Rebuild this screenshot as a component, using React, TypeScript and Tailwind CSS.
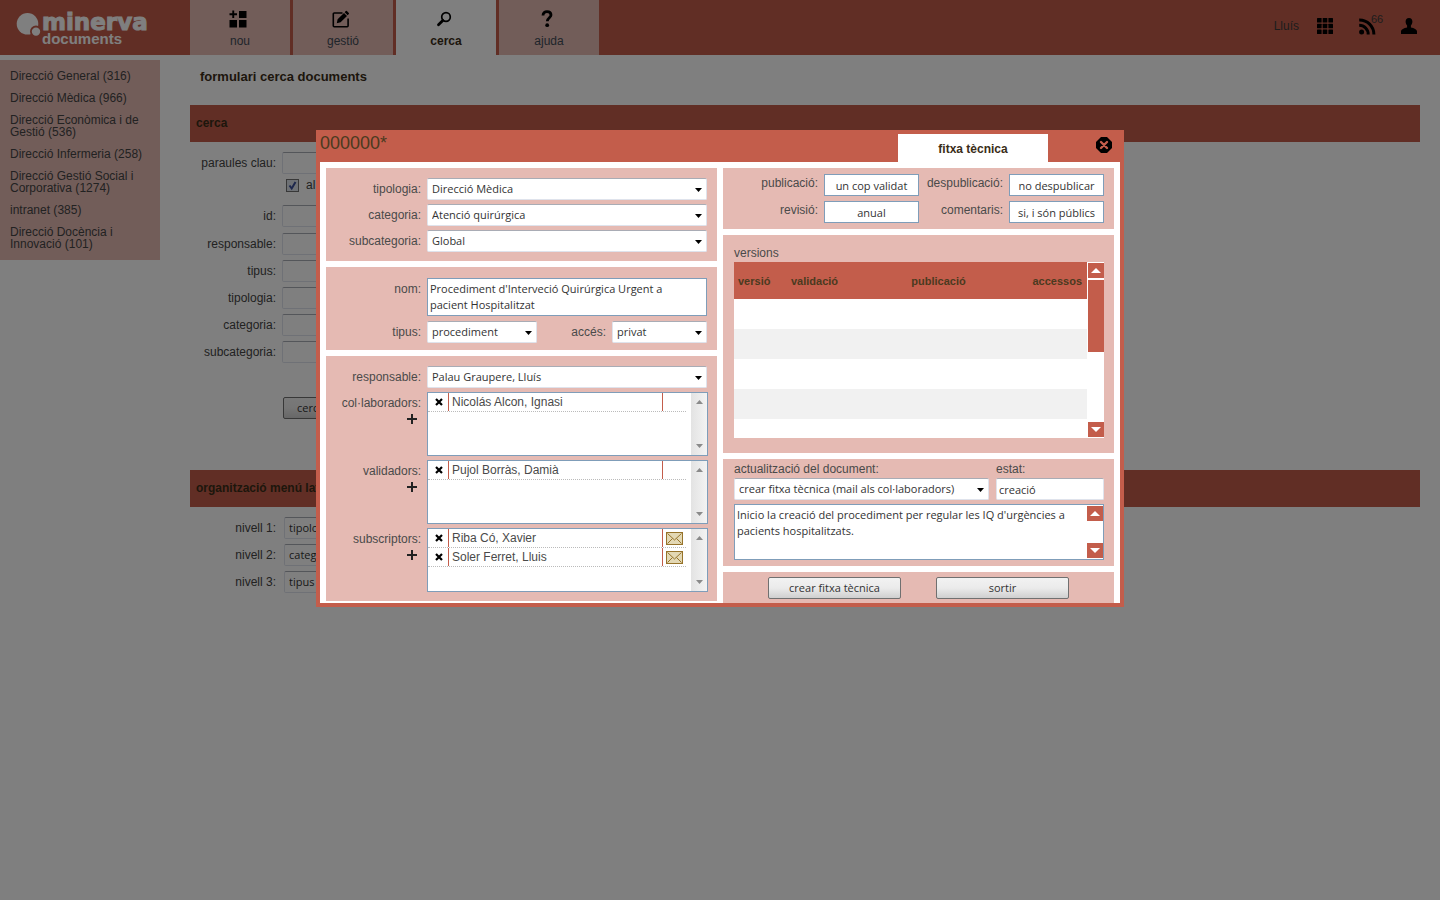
import React, { useState } from 'react'

const menu = [
  { name: 'Direcció General', count: 316 },
  { name: 'Direcció Mèdica', count: 966 },
  { name: 'Direcció Econòmica i de Gestió', count: 536 },
  { name: 'Direcció Infermeria', count: 258 },
  { name: 'Direcció Gestió Social i Corporativa', count: 1274 },
  { name: 'intranet', count: 385 },
  { name: 'Direcció Docència i Innovació', count: 101 },
]

const Logo = () => (
  <a href="#" className="flex w-[190px] items-start pl-4 pt-3 text-white" aria-label="minerva documents">
    <svg width="26" height="26" viewBox="0 0 26 26" fill="currentColor" className="shrink-0">
      <circle cx="11.500" cy="11.800" r="10.800" />
      <circle cx="20" cy="19.600" r="5.100" stroke="#c35d4b" strokeWidth="1.800" />
    </svg>
    <span className="flex flex-col font-bold">
      <span className="font-['DejaVu_Sans',sans-serif] text-[23px] leading-5 [-webkit-text-stroke:1px_white]">minerva</span>
      <span className="text-[15px] leading-[14px]">documents</span>
    </span>
  </a>
)

const NewIcon = () => (
  <svg width="18" height="18" viewBox="0 0 18 18" fill="currentColor">
    <path d="M3.300 0.500h1.900v2.800H8v1.900H5.200V8H3.300V5.200H0.500V3.300h2.800zM10 1h7.500v7H10zM0.500 10H8v7.500H0.500zM10 10h7.500v7.500H10z" />
  </svg>
)

const EditIcon = () => (
  <svg width="18" height="18" viewBox="0 0 18 18" fill="none">
    <path d="M10.500 3H2.200A.9.9 0 0 0 1.300 3.900V15.800a.9.900 0 0 0 .9.900H15.200a.9.900 0 0 0 .9-.9V8.500" stroke="currentColor" strokeWidth="1.600" />
    <path d="M4.800 13.200l.8-3.900 6.400-6.400 3 3-6.400 6.400zM12.700 2.200l1.100-1.100a.8.800 0 0 1 1.100 0l1.900 1.900a.8.800 0 0 1 0 1.100l-1.100 1.100z" fill="currentColor" />
  </svg>
)

const SearchIcon = () => (
  <svg width="18" height="18" viewBox="0 0 18 18" fill="none" stroke="currentColor">
    <circle cx="11" cy="7" r="4.300" strokeWidth="1.700" />
    <path d="M7.800 10.500L3.500 14.700" strokeWidth="2.800" strokeLinecap="round" />
  </svg>
)

const HelpIcon = () => (
  <svg width="18" height="18" viewBox="0 0 18 18" fill="none">
    <path d="M5 5.500C5 2.800 6.800 1.700 9 1.700s4 1.200 4 3.400c0 2.600-3.700 2.800-3.700 6.200" stroke="currentColor" strokeWidth="2.800" />
    <circle cx="9.200" cy="15.200" r="1.900" fill="currentColor" />
  </svg>
)

const GridIcon = () => (
  <svg width="16" height="16" viewBox="0 0 16 16" fill="currentColor">
    {[0, 5.7, 11.4].map((y) => [0, 5.7, 11.4].map((x) => <rect key={`${x}-${y}`} x={x} y={y} width="4.600" height="4.600" rx="0.500" />))}
  </svg>
)

const FeedIcon = () => (
  <svg width="17" height="17" viewBox="0 0 17 17" fill="none" stroke="currentColor" strokeWidth="3">
    <circle cx="2.600" cy="14" r="2.500" fill="currentColor" stroke="none" />
    <path d="M0.200 7.200a9 9 0 0 1 9 9.300M0.200 1.900a14.500 14.500 0 0 1 14.700 14.600" />
  </svg>
)

const UserIcon = () => (
  <svg width="18" height="18" viewBox="0 0 18 18" fill="currentColor">
    <path d="M9 1C6.700 1 5.600 2.600 5.600 4.600c0 1.700.7 3 1.500 3.900v2.100C4 11.200 1 12.400 1 14.600V17h16v-2.400c0-2.200-3-3.400-6.100-4V8.500c.8-.9 1.500-2.200 1.500-3.900C12.400 2.600 11.300 1 9 1z" />
  </svg>
)

const CloseIcon = () => (
  <svg width="16" height="16" viewBox="0 0 16 16">
    <path d="M5 0h6l5 5v6l-5 5H5l-5-5V5z" fill="#000" />
    <path d="M5 5l6 6M11 5l-6 6" stroke="#c35d4b" strokeWidth="2.400" strokeLinecap="round" />
  </svg>
)

const MailIcon = () => (
  <svg width="17" height="13" viewBox="0 0 17 13" fill="none">
    <rect x="0.500" y="0.500" width="16" height="12" fill="#e3d8b4" stroke="#96732a" />
    <path d="M1.500 1.500l7 6.500 7-6.500M1.500 11.500L6.500 6.500M15.500 11.500l-5-5" stroke="#96732a" />
  </svg>
)

const Arrow = ({ up = false, className = '' }: { up?: boolean; className?: string }) => (
  <svg width="10" height="5" viewBox="0 0 10 5" fill="currentColor" className={className}>
    <path d={up ? 'M0 5L5 0L10 5z' : 'M0 0L5 5L10 0z'} />
  </svg>
)

const tabs = [
  { name: 'nou', icon: <NewIcon /> },
  { name: 'gestió', icon: <EditIcon /> },
  { name: 'cerca', icon: <SearchIcon />, active: true },
  { name: 'ajuda', icon: <HelpIcon /> },
]

const field = "h-[22px] rounded-xs border border-[#dfe3ec] border-t-[#a9acb5] bg-white font-['Open_Sans',sans-serif] text-[11px] text-[#333]"

type SelectProps = { id: string; value: string; className?: string }

const Select = ({ id, value, className = 'w-full' }: SelectProps) => (
  <div className={`relative ${className}`}>
    <select id={id} className={`${field} block w-full appearance-none pl-1 pr-5`}>
      <option>{value}</option>
    </select>
    <svg width="7" height="4" viewBox="0 0 7 4" className="pointer-events-none absolute right-[5px] top-[10px]">
      <path d="M0 0h7L3.500 4z" fill="#000" />
    </svg>
  </div>
)

const FormRow = ({ id, label, children }: React.PropsWithChildren<{ id: string; label: string }>) => (
  <div className="flex items-center gap-1.5">
    <label htmlFor={id} className="w-[86px] text-right">{label}</label>
    {children}
  </div>
)

const ModalRow = ({ id, label, children }: React.PropsWithChildren<{ id: string; label: string }>) => (
  <div className="flex items-start gap-1.5">
    <label htmlFor={id} className="w-[95px] shrink-0 text-right leading-[22px]">{label}</label>
    {children}
  </div>
)

const PeopleList = ({ label, people, mail = false }: { label: string; people: string[]; mail?: boolean }) => (
  <div className="flex gap-1.5">
    <div className="flex w-[95px] shrink-0 flex-col items-end">
      <span className="leading-[22px]">{label}</span>
      <button type="button" aria-label={`afegir ${label}`} className="mr-1 text-[#222]">
        <svg width="10" height="10" viewBox="0 0 10 10" stroke="currentColor" strokeWidth="2"><path d="M5 0v10M0 5h10" /></svg>
      </button>
    </div>
    <div className="-mr-px flex h-16 flex-1 border border-[#7f9db9] bg-white">
      <ul className="mr-[5px] flex-1">
        {people.map((p) => (
          <li key={p} className="flex h-[19px] border-b border-dotted border-[#bbb]">
            <button type="button" aria-label={`treure ${p}`} className="flex w-5 items-center justify-center pl-0.5 text-black">
              <svg width="8" height="8" viewBox="0 0 8 8" stroke="currentColor" strokeWidth="2.200"><path d="M1 1l6 6M7 1L1 7" /></svg>
            </button>
            <span className="flex-1 border-x border-solid border-[#c35d4b] pl-[3px] leading-[18px]">{p}</span>
            <span className="flex w-[23px] items-center pl-[3px]">{mail && <MailIcon />}</span>
          </li>
        ))}
      </ul>
      <div className="flex w-4 flex-col items-center justify-between bg-linear-to-r from-[#e3e3e3] to-[#f3f3f3] py-[7px] text-[#8a8a8a]">
        <svg width="7" height="4" viewBox="0 0 7 4" fill="currentColor"><path d="M0 4h7L3.500 0z" /></svg>
        <svg width="7" height="4" viewBox="0 0 7 4" fill="currentColor"><path d="M0 0h7L3.500 4z" /></svg>
      </div>
    </div>
  </div>
)

const ScrollButton = ({ up = false }: { up?: boolean }) => (
  <button type="button" aria-label={up ? 'pujar' : 'baixar'} className="flex h-[15px] w-4 items-center justify-center bg-[#c35d4b] text-white">
    <Arrow up={up} />
  </button>
)

const panel = 'bg-[#e5bab3]'
const small = "border border-[#7f9db9] bg-white font-['Open_Sans',sans-serif] text-[11px] text-[#333]"
const grayButton = "h-[22px] rounded-xs border border-[#707070] bg-linear-to-b from-[#f2f2f2] via-[#ebebeb] via-50% to-[#cfcfcf] font-['Open_Sans',sans-serif] text-[11px] leading-[18px] text-[#333]"

const settings = [
  { id: 'publicacio', label: 'publicació:', value: 'un cop validat' },
  { id: 'despublicacio', label: 'despublicació:', value: 'no despublicar' },
  { id: 'revisio', label: 'revisió:', value: 'anual' },
  { id: 'comentaris', label: 'comentaris:', value: 'si, i són públics' },
]

const Modal = ({ onClose }: { onClose: () => void }) => (
  <div className="fixed inset-0 flex items-start justify-center bg-black/50 pt-[130px]">
    <section role="dialog" aria-label="fitxa tècnica" className="w-[808px] border-4 border-[#c35d4b] bg-white text-[#4a4a4a]">
      <header className="flex h-7 bg-[#c35d4b] text-[#4b3a1f]">
        <h2 className="flex-1 text-lg leading-[18px]">000000*</h2>
        <button type="button" className="w-[150px] bg-white pt-0.5 text-xs font-bold text-[#3a2d18]">fitxa tècnica</button>
        <div className="flex w-[72px] items-start justify-end pr-2 pt-[3px]">
          <button type="button" aria-label="tancar" onClick={onClose}><CloseIcon /></button>
        </div>
      </header>

      <div className="flex gap-1.5 px-1.5 pt-1.5">
        <div className="mb-0.5 flex flex-1 flex-col gap-1.5">
          <div className={`${panel} flex flex-col gap-1 pb-[9px] pr-2.5 pt-2.5`}>
            <ModalRow id="m-tipologia" label="tipologia:"><Select id="m-tipologia" value="Direcció Mèdica" /></ModalRow>
            <ModalRow id="m-categoria" label="categoria:"><Select id="m-categoria" value="Atenció quirúrgica" /></ModalRow>
            <ModalRow id="m-subcategoria" label="subcategoria:"><Select id="m-subcategoria" value="Global" /></ModalRow>
          </div>

          <div className={`${panel} flex flex-col gap-[5px] pb-[7px] pr-2.5 pt-[11px]`}>
            <ModalRow id="m-nom" label="nom:">
              <textarea id="m-nom" className={`${small} block h-[38px] w-full resize-none overflow-hidden py-0.5 pl-0.5 pr-8 leading-4`} defaultValue={"Procediment d'Interveció Quirúrgica Urgent a pacient Hospitalitzat"} />
            </ModalRow>
            <div className="flex items-start justify-between">
              <ModalRow id="m-tipus" label="tipus:"><Select id="m-tipus" value="procediment" className="w-[110px]" /></ModalRow>
              <div className="flex gap-1.5">
                <label htmlFor="m-acces" className="leading-[22px]">accés:</label>
                <Select id="m-acces" value="privat" className="w-[95px]" />
              </div>
            </div>
          </div>

          <div className={`${panel} flex flex-col gap-1 pb-[9px] pr-2.5 pt-2.5`}>
            <ModalRow id="m-responsable" label="responsable:"><Select id="m-responsable" value="Palau Graupere, Lluís" /></ModalRow>
            <PeopleList label="col·laboradors:" people={['Nicolás Alcon, Ignasi']} />
            <PeopleList label="validadors:" people={['Pujol Borràs, Damià']} />
            <PeopleList label="subscriptors:" people={['Riba Có, Xavier', 'Soler Ferret, Lluis']} mail />
          </div>
        </div>

        <div className="flex flex-1 flex-col gap-1.5">
          <div className={`${panel} grid grid-cols-[95px_95px_78px_95px] gap-x-1.5 gap-y-[5px] py-1.5`}>
            {settings.map((s) => (
              <React.Fragment key={s.id}>
                <label htmlFor={s.id} className="flex justify-end whitespace-nowrap leading-[18px]">{s.label}</label>
                <input id={s.id} defaultValue={s.value} className={`${small} h-[22px] w-full text-center`} />
              </React.Fragment>
            ))}
          </div>

          <div className={`${panel} px-[11px] pb-[15px] pt-2.5`}>
            <h3 className="leading-[17px]">versions</h3>
            <div className="-mr-px flex h-44 gap-px overflow-hidden bg-white">
              <table className="flex-1 self-start text-left text-[11px]">
                <thead>
                  <tr className="h-[37px] bg-[#c35d4b] text-[#4b3a1f]">
                    <th className="w-[53px] pl-1 pt-0.5">versió</th>
                    <th className="w-[100px] pl-1 pt-0.5">validació</th>
                    <th className="w-[103px] pt-0.5 text-center">publicació</th>
                    <th className="pr-[5px] pt-0.5 text-right">accessos</th>
                  </tr>
                </thead>
                <tbody>
                  {[1, 2, 3, 4, 5].map((n) => (
                    <tr key={n} className="h-[30px] even:bg-[#f1f1f1]"><td colSpan={4} /></tr>
                  ))}
                </tbody>
              </table>
              <div className="flex w-4 flex-col gap-0.5 py-px">
                <ScrollButton up />
                <div className="mb-auto h-[72px] bg-[#c35d4b]" />
                <ScrollButton />
              </div>
            </div>
          </div>

          <div className={`${panel} flex flex-col gap-1 px-[11px] pb-1.5 pt-0.5`}>
            <div className="-mr-px flex gap-[7px]">
              <div className="flex-1">
                <label htmlFor="m-actualitzacio" className="block leading-[17px]">actualització del document:</label>
                <Select id="m-actualitzacio" value="crear fitxa tècnica (mail als col·laboradors)" />
              </div>
              <div className="w-[108px]">
                <label htmlFor="m-estat" className="block leading-[17px]">estat:</label>
                <input id="m-estat" defaultValue="creació" className={`${field} block w-full px-0.5`} />
              </div>
            </div>
            <div className="-mr-px flex h-14 border border-[#7f9db9] bg-white">
              <textarea aria-label="comentari" className="flex-1 resize-none overflow-hidden px-0.5 py-0.5 font-['Open_Sans',sans-serif] text-[11px] leading-4 text-[#333]" defaultValue="Inicio la creació del procediment per regular les IQ d'urgències a pacients hospitalitzats." />
              <div className="flex flex-col justify-between py-px">
                <ScrollButton up />
                <ScrollButton />
              </div>
            </div>
          </div>

          <div className={`${panel} flex flex-1 items-start justify-center gap-[35px] pt-[5px]`}>
            <button type="button" className={`${grayButton} w-[133px]`}>crear fitxa tècnica</button>
            <button type="button" className={`${grayButton} w-[133px]`} onClick={onClose}>sortir</button>
          </div>
        </div>
      </div>
    </section>
  </div>
)

const App = () => {
  const [open, setOpen] = useState(true)
  return (
    <div className="min-h-screen bg-white font-['Liberation_Sans',Arial,sans-serif] text-xs text-[#444]">
      <header className="flex h-[55px] bg-[#c35d4b]">
        <Logo />
        <nav className="flex gap-[3px]">
          {tabs.map((t) => (
            <a key={t.name} href="#" className={`flex w-[100px] flex-col items-center gap-1.5 pt-2.5 ${t.active ? 'bg-white font-bold text-[#3a2d18]' : 'bg-[#e5bab3] text-[#3f4a55]'}`}>
              <span className="pr-1 text-black">{t.icon}</span>
              <span className="leading-[14px]">{t.name}</span>
            </a>
          ))}
        </nav>
        <div className="ml-auto flex items-center gap-[18px] pb-[3px] pr-[22px] text-black">
          <span className="text-[#3a3a3a]">Lluís</span>
          <a href="#" aria-label="aplicacions"><GridIcon /></a>
          <a href="#" aria-label="avisos" className="relative ml-2">
            <FeedIcon />
            <span className="absolute -top-3.5 left-3 text-[11px] leading-[30px] text-[#3a3a3a]">66</span>
          </a>
          <a href="#" aria-label="usuari" className="ml-1.5"><UserIcon /></a>
        </div>
      </header>

      <div className="flex items-start gap-[30px] pr-5">
        <aside className="mt-[5px] flex w-40 shrink-0 flex-col gap-2.5 bg-[#e5bab3] p-2.5 leading-3">
          {menu.map((m) => (
            <a key={m.name} href="#">{m.name} ({m.count})</a>
          ))}
        </aside>

        <main className="flex-1">
          <h1 className="pb-[19px] pl-2.5 pt-[13px] text-[13px] font-bold leading-[18px] text-[#3a2d18]">formulari cerca documents</h1>
          <h2 className="bg-[#c35d4b] pl-1.5 font-bold leading-[37px] text-[#3a2d18]">cerca</h2>
          <form className="flex flex-col gap-[5px] pt-2.5">
            <div className="mb-1">
              <FormRow id="paraules" label="paraules clau:"><input id="paraules" className={`${field} w-[280px]`} /></FormRow>
              <div className="ml-24 flex h-[22px] items-center gap-[7px]">
                <span className="relative block h-[13px] w-[13px]">
                  <input id="almenys" type="checkbox" defaultChecked className="peer block h-[13px] w-[13px] appearance-none border border-[#707070] bg-[#dde3ea]" />
                  <svg width="13" height="13" viewBox="0 0 13 13" fill="none" className="pointer-events-none absolute inset-0 hidden peer-checked:block">
                    <path d="M3.500 6.500l2.200 3L9.500 3" stroke="#3a4f9a" strokeWidth="2" />
                  </svg>
                </span>
                <label htmlFor="almenys">al menys una</label>
              </div>
            </div>
            <div className="mb-px">
              <FormRow id="id" label="id:"><input id="id" className={`${field} w-[280px]`} /></FormRow>
            </div>
            <FormRow id="responsable" label="responsable:"><input id="responsable" className={`${field} w-[280px]`} /></FormRow>
            <FormRow id="tipus" label="tipus:"><Select id="tipus" value="" className="w-[280px]" /></FormRow>
            <FormRow id="tipologia" label="tipologia:"><Select id="tipologia" value="" className="w-[280px]" /></FormRow>
            <FormRow id="categoria" label="categoria:"><Select id="categoria" value="" className="w-[280px]" /></FormRow>
            <FormRow id="subcategoria" label="subcategoria:"><Select id="subcategoria" value="" className="w-[280px]" /></FormRow>
            <button type="button" onClick={() => setOpen(true)} className={`${grayButton} ml-[93px] mt-[29px] w-[60px]`}>cercar</button>
          </form>

          <h2 className="mt-[51px] bg-[#c35d4b] pl-1.5 font-bold leading-[37px] text-[#3a2d18]">organització menú lateral</h2>
          <form className="flex flex-col gap-[5px] pt-2.5">
            <FormRow id="nivell1" label="nivell 1:"><Select id="nivell1" value="tipologia" className="ml-0.5 w-[140px]" /></FormRow>
            <FormRow id="nivell2" label="nivell 2:"><Select id="nivell2" value="categoria" className="ml-0.5 w-[140px]" /></FormRow>
            <FormRow id="nivell3" label="nivell 3:"><Select id="nivell3" value="tipus" className="ml-0.5 w-[140px]" /></FormRow>
          </form>
        </main>
      </div>

      {open && <Modal onClose={() => setOpen(false)} />}
    </div>
  )
}

export default App
